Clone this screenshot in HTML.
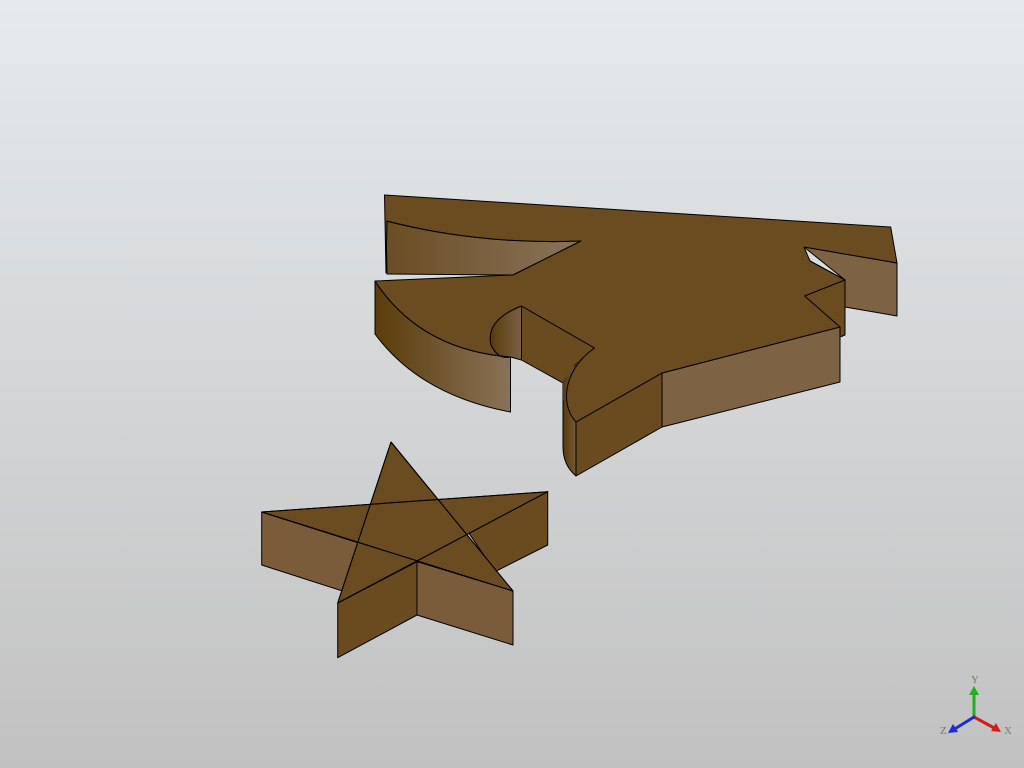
<!DOCTYPE html>
<html><head><style>
html,body{margin:0;padding:0}
body{width:1024px;height:768px;overflow:hidden;background:linear-gradient(#e6eaed,#c1c1c1);}
svg{position:absolute;left:0;top:0}
</style></head><body>
<svg width="1024" height="768" viewBox="0 0 1024 768">
<defs>
<linearGradient id="g1" x1="0" x2="1" y1="0" y2="0"><stop offset="0" stop-color="#5a3d0a"/><stop offset="1" stop-color="#8a7258"/></linearGradient>
<linearGradient id="g2" x1="0" x2="1" y1="0" y2="0"><stop offset="0" stop-color="#6a4d24"/><stop offset="1" stop-color="#8a735a"/></linearGradient>
<linearGradient id="g3" x1="0" x2="1" y1="0" y2="0"><stop offset="0" stop-color="#583b0a"/><stop offset="1" stop-color="#7a6146"/></linearGradient>
</defs>
<g stroke="#000" stroke-width="1" stroke-linejoin="round">
<path d="M386,221 Q480,245 581,241 L513,275 L387,274 Z" fill="url(#g2)"/>
<path d="M804,247 L897,263 L897,316 L845,307 L845,280 Z" fill="#7d6244"/>
<path d="M810,261 L845,280 L845,335 L840,337 L804.6,296 Z" fill="#6b4c21"/>
<path d="M662,373 L840,327 L840,382 L662,427 Z" fill="#7d6244"/>
<path d="M576,422 L662,373 L662,427 L576,476 Z" fill="#6a4b20"/>
<path d="M521.5,306 L594.5,348 L575,365 L563,400 L563,383 L521.5,360 Z" fill="#6a4b20"/>
<path d="M563,380 L580,360 L576,422 L576,476 Q563,465 563,447 Z" fill="url(#g3)" stroke="none"/>
<path d="M576,476 Q563,465 563,447 L563,400" fill="none"/>
<path d="M521.5,306 Q485,320 491,345 Q498,360 510.5,357 L521.5,360 Z" fill="url(#g3)"/>
<path d="M375,281 Q420,350 510.5,357 L510.5,412 Q420,395 375,334 Z" fill="url(#g1)"/>
<path d="M384.5,195 L890.7,227 L897,263 L804,247 L810,261 L845,280 L804.6,296 L840,327 L662,373 L576,422 C560,405 563,370 594.5,348 L521.5,306 Q485,320 491,345 Q498,360 510.5,357 Q420,350 375,281 L513,275 L581,241 Q480,245 387,221 L386,273 Z" fill="#6b4c21"/>
<line x1="521.5" y1="306" x2="521.5" y2="360"/>
<line x1="662" y1="373" x2="662" y2="427"/>
<line x1="576" y1="422" x2="576" y2="476"/>
<line x1="845" y1="280" x2="845" y2="335"/>
<path d="M547.7,491.7 L547.7,545 L495,571.7 L460,520 Z" fill="#6a4b20"/>
<path d="M261.7,512 L417,561.7 L417,615 L261.7,565 Z" fill="#7a5c3a"/>
<path d="M417,561.7 L513,591 L513,645 L417,615 Z" fill="#7a5c3a"/>
<path d="M337.7,603 L417,561.7 L417,615 L337.7,657.7 Z" fill="#6a4b20"/>
<path d="M391,442 L513,591 L261.7,512 L547.7,491.7 L337.7,603 Z" fill="#6b4c21" fill-rule="nonzero"/>
<path d="M391,442 L513,591 M261.7,512 L547.7,491.7 M337.7,603 L391,442 M261.7,512 L513,591 M337.7,603 L547.7,491.7" fill="none"/>
</g>
<g stroke-width="3" stroke-linecap="round">
<line x1="974" y1="717" x2="974" y2="693" stroke="#1db31d"/>
<line x1="974" y1="717" x2="996" y2="729" stroke="#d41c1c"/>
<line x1="974" y1="717" x2="953" y2="730" stroke="#1c2ccf"/>
</g>
<path d="M974,686 L969,695 L979,695 Z" fill="#1db31d"/>
<path d="M1001,732 L991,731 L996,723 Z" fill="#d41c1c"/>
<path d="M948,733 L953,724 L958,732 Z" fill="#1c2ccf"/>
<g font-family="Liberation Serif,serif" font-size="11" fill="#777">
<text x="971" y="683">Y</text><text x="1004" y="734">X</text><text x="940" y="734">Z</text>
</g>
</svg>
</body></html>
